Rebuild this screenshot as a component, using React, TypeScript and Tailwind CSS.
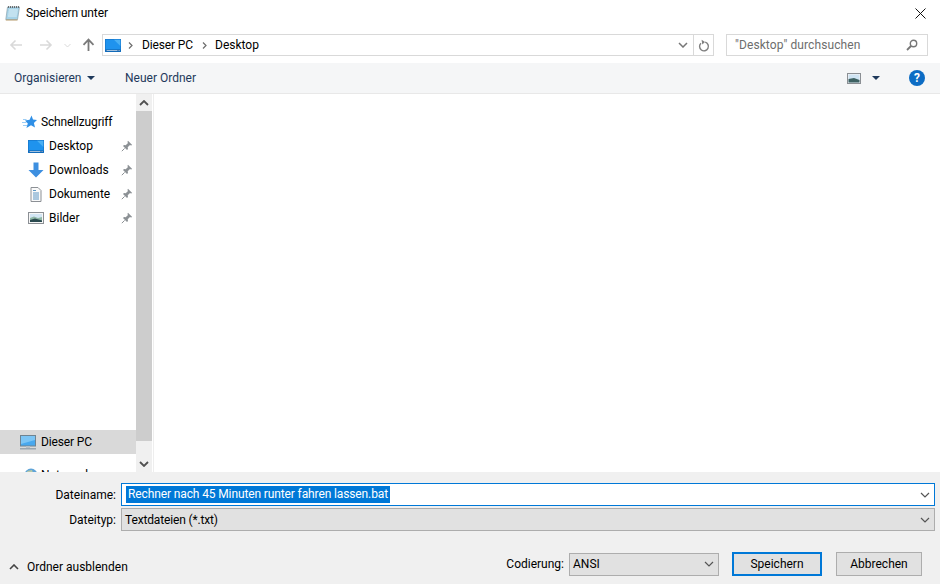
import React from "react";

function Chevron({ className = "", stroke = "#6d6d6d", up = false, sw = 1.2 }: { className?: string; stroke?: string; up?: boolean; sw?: number }) {
  return (
    <svg width="10" height="6" viewBox="0 0 10 6" className={className} fill="none">
      <path d={up ? "M1 5L5 1L9 5" : "M1 1L5 5L9 1"} stroke={stroke} strokeWidth={sw} />
    </svg>
  );
}

function Chevron2() {
  return (
    <svg width="5" height="7" viewBox="0 0 5 7" fill="none">
      <path d="M1 0.5L4 3.5L1 6.5" stroke="#6d6d6d" strokeWidth="1.2" />
    </svg>
  );
}

function MonitorIcon() {
  return (
    <svg width="16" height="13" viewBox="0 0 16 13">
      <rect x="0" y="0" width="16" height="13" fill="#1676c9" />
      <rect x="0.7" y="0.7" width="14.6" height="10" fill="#1f93ee" />
      <path d="M9 0.7H15.3V7Z" fill="#4ab0f5" />
      <rect x="0.7" y="10.7" width="14.6" height="1.6" fill="#0b4f94" />
      <rect x="1.5" y="11.2" width="11" height="0.7" fill="#e4f1fb" />
      <rect x="13.5" y="11.2" width="1.2" height="0.7" fill="#e4f1fb" />
    </svg>
  );
}

function PictureIcon() {
  return (
    <svg width="16" height="12" viewBox="0 0 16 12">
      <rect x="0.5" y="0.5" width="15" height="11" fill="#f6f6f6" stroke="#8b8f94" />
      <rect x="2" y="2" width="12" height="8" fill="#d3e6f4" />
      <path d="M2 6L6 4.5L10 6L14 5V10H2Z" fill="#8fb7a6" />
      <path d="M2 8L7 6.5L14 8.5V10H2Z" fill="#2a4a4f" />
    </svg>
  );
}

function Pin() {
  return (
    <svg width="12" height="12" viewBox="0 0 12 12">
      <path d="M7 0.8L11.2 5L10 5.6L9 5L6.7 7.3L7 9L6 10L2 6L3 5L4.7 5.3L7 3L6.4 2Z" fill="#8c9195" />
      <path d="M3.6 8.4L0.8 11.2" stroke="#8c9195" strokeWidth="1" />
    </svg>
  );
}

function Row({ icon, label, pin = false, selected = false, pl = "pl-[28px]", gap = "w-[21px]", tight = false }: { icon: React.ReactNode; label: string; pin?: boolean; selected?: boolean; pl?: string; gap?: string; tight?: boolean }) {
  return (
    <div className={`h-[24px] shrink-0 flex items-center ${pl} ${selected ? "bg-[#d9d9d9]" : ""}`}>
      <div className={`${gap} shrink-0 flex items-center`}>{icon}</div>
      <span className={`flex-1 text-black ${tight ? "tracking-[-0.15px]" : ""}`}>{label}</span>
      {pin && <div className="mr-[3px] flex"><Pin /></div>}
    </div>
  );
}

export default function App() {
  return (
    <div className="w-[940px] h-[584px] overflow-hidden flex flex-col bg-white text-[12px] leading-[16px] text-black" style={{ fontFamily: 'Roboto, "Noto Sans", sans-serif' }}>
      {/* Title bar */}
      <div className="h-[26px] shrink-0 flex items-center pl-[5px] pr-[14px]">
        <svg width="15" height="16" viewBox="0 0 15 16" className="mr-[6px]">
          <path d="M2.5 2H14.5L12.5 14.5H0.8Z" fill="#a6d3e8" stroke="#8aa2ad" strokeWidth="0.7" />
          <path d="M4 5H12.8M3.6 7H12.5M3.3 9H12.2M3 11H11.8" stroke="#dff0f7" strokeWidth="1" />
          <path d="M3.5 1V3M5.5 1V3M7.5 1V3M9.5 1V3M11.5 1V3M13.5 1V3" stroke="#555" strokeWidth="0.8" />
          <path d="M0.8 15H12.5" stroke="#b59a6b" strokeWidth="1" fill="none" />
        </svg>
        <span className="flex-1 tracking-[-0.12px]">Speichern unter</span>
        <svg width="11" height="11" viewBox="0 0 11 11" fill="none">
          <path d="M0.5 0.5L10.5 10.5M10.5 0.5L0.5 10.5" stroke="#111" strokeWidth="1" />
        </svg>
      </div>

      {/* Nav row */}
      <div className="h-[37px] shrink-0 flex pt-[8px] pr-[12px]">
        <div className="w-[102px] h-[22px] shrink-0 flex items-center">
          <svg width="14" height="12" viewBox="0 0 14 12" className="ml-[9px]" fill="none">
            <path d="M13 6H2M6.5 1.5L2 6L6.5 10.5" stroke="#d9d9d9" strokeWidth="1.6" />
          </svg>
          <svg width="14" height="12" viewBox="0 0 14 12" className="ml-[16px]" fill="none">
            <path d="M1 6H12M7.5 1.5L12 6L7.5 10.5" stroke="#d9d9d9" strokeWidth="1.6" />
          </svg>
          <svg width="7" height="5" viewBox="0 0 7 5" className="ml-[11px]" fill="none">
            <path d="M0.5 1L3.5 4L6.5 1" stroke="#d9d9d9" strokeWidth="1" />
          </svg>
          <svg width="13" height="14" viewBox="0 0 13 14" className="ml-[11px]" fill="none">
            <path d="M6.5 13V2M1.5 6.8L6.5 1.6L11.5 6.8" stroke="#7a7a7a" strokeWidth="1.8" />
          </svg>
        </div>
        <div className="w-[612px] h-[22px] shrink-0 border border-[#d9d9d9] flex items-center">
          <div className="ml-[2px] mr-[7px] flex"><MonitorIcon /></div>
          <Chevron2 />
          <span className="ml-[9px] w-[60px] tracking-[-0.15px]">Dieser PC</span>
          <Chevron2 />
          <span className="ml-[8px]">Desktop</span>
          <div className="flex-1" />
          <Chevron className="mr-[5px]" stroke="#777" sw={1.5} />
          <div className="w-[20px] h-full border-l border-[#d9d9d9] flex items-center justify-center">
            <svg width="12" height="13" viewBox="0 0 12 13" fill="none">
              <path d="M7.2 3.2A4.4 4.4 0 1 1 3 4.2" stroke="#7f7f7f" strokeWidth="1.4" />
              <path d="M3.6 0.8L7 3.1L4.3 5.6Z" fill="#7f7f7f" />
            </svg>
          </div>
        </div>
        <div className="flex-1 ml-[12px] h-[22px] border border-[#d9d9d9] flex items-center pl-[8px] pr-[9px]">
          <span className="flex-1 text-[#6d6d6d] tracking-[0.1px]">"Desktop" durchsuchen</span>
          <svg width="12" height="12" viewBox="0 0 12 12" fill="none">
            <circle cx="7.5" cy="4.5" r="3.2" stroke="#777" strokeWidth="1.4" />
            <path d="M5 7L1 11" stroke="#777" strokeWidth="1.8" />
          </svg>
        </div>
      </div>

      {/* Toolbar */}
      <div className="h-[31px] shrink-0 bg-[#f5f6f7] border-b border-[#e8e8e8] flex items-center pl-[14px] pr-[15px]">
        <span className="text-[#1e395b] w-[68px]">Organisieren</span>
        <svg width="8" height="4" viewBox="0 0 8 4" className="ml-[5px]"><path d="M0 0H8L4 4Z" fill="#1e395b" /></svg>
        <span className="ml-[30px] text-[#1e395b]">Neuer Ordner</span>
        <div className="flex-1" />
        <svg width="14" height="11" viewBox="0 0 14 11">
          <rect x="0.5" y="0.5" width="13" height="10" fill="#f4f4f4" stroke="#8b8f94" />
          <rect x="1.5" y="1.5" width="11" height="8" fill="#cfe4f3" />
          <path d="M1.5 6L7 5L12.5 7V9.5H1.5Z" fill="#3d6162" />
        </svg>
        <svg width="8" height="4" viewBox="0 0 8 4" className="ml-[11px]"><path d="M0 0H8L4 4Z" fill="#1e395b" /></svg>
        <div className="ml-[29px] w-[16px] h-[16px] rounded-full bg-[#0c6cc4] flex items-center justify-center text-white font-bold text-[12px]">?</div>
      </div>

      {/* Main */}
      <div className="h-[378px] shrink-0 flex overflow-hidden">
        <div className="w-[136px] shrink-0 flex flex-col pt-[16px] overflow-hidden">
          <Row pl="pl-[22px]" gap="w-[19px]" label="Schnellzugriff" tight icon={
            <svg width="15" height="14" viewBox="0 0 15 14">
              <path d="M9.5 0.5L11 4.6L15 5L11.9 7.9L13 12.6L9 10.2L4.4 13L5.8 8.4L3 5.4L7.6 4.8Z" fill="#2f8fe6" />
              <path d="M1 4.5H4.5M0 7.5H4.5M1 10.5H5" stroke="#9ccdf5" strokeWidth="1" />
            </svg>
          } />
          <Row pin label="Desktop" icon={<MonitorIcon />} />
          <Row pin label="Downloads" icon={
            <svg width="16" height="16" viewBox="0 0 16 16">
              <path d="M5.5 0.5H10.5V8H15.5L8 15.5L0.5 8H5.5Z" fill="#3d8fe0" />
            </svg>
          } />
          <Row pin label="Dokumente" icon={
            <svg width="16" height="15" viewBox="0 0 16 15">
              <path d="M3 0.5H10L13 3.5V14.5H3Z" fill="#fafafa" stroke="#8c9095" />
              <path d="M5 3.5H8M5 6H11M5 8H11M5 10H11M5 12H11" stroke="#4a8bbd" strokeWidth="0.9" />
            </svg>
          } />
          <Row pin label="Bilder" icon={<PictureIcon />} />
          <div className="mt-[200px]">
            <Row selected pl="pl-[20px]" label="Dieser PC" tight icon={
              <svg width="16" height="15" viewBox="0 0 16 15">
                <rect x="0.5" y="0.5" width="15" height="10.5" fill="#48a8ee" stroke="#6f8391" />
                <path d="M1 1H15V5L1 9Z" fill="#7cc5f5" />
                <rect x="0" y="13" width="16" height="1.5" fill="#9aa6af" />
                <rect x="6" y="11" width="4" height="2" fill="#b6bec4" />
              </svg>
            } />
          </div>
          <div className="mt-[9px]">
            <Row pl="pl-[24px]" gap="w-[17px]" label="Netzwerk" icon={
              <svg width="14" height="14" viewBox="0 0 14 14">
                <circle cx="7" cy="7" r="6.5" fill="#5fa4d8" />
                <path d="M3 3L8 2L9 5L5 7Z" fill="#b7c9a8" />
              </svg>
            } />
          </div>
        </div>
        {/* Scrollbar */}
        <div className="w-[16px] shrink-0 bg-[#f0f0f0] flex flex-col">
          <div className="h-[17px] shrink-0 flex items-center justify-center"><Chevron up stroke="#505050" sw={1.8} /></div>
          <div className="h-[330px] shrink-0 bg-[#cdcdcd]" />
          <div className="flex-1 flex items-end justify-center pb-[5px]"><Chevron stroke="#505050" sw={1.8} /></div>
        </div>
        <div className="flex-1 ml-[1px] border-l border-[#eeeeee] bg-white" />
      </div>

      {/* Bottom panel */}
      <div className="flex-1 bg-[#f0f0f0] flex flex-col pt-[11px] pl-[121px] pr-[5px]">
        <div className="h-[23px] flex border border-[#0078d7] bg-white items-center relative">
          <span className="absolute right-[calc(100%+6px)] whitespace-nowrap">Dateiname:</span>
          <span className="ml-[4px] bg-[#0078d7] text-white px-[2px] h-[17px] leading-[17px] whitespace-nowrap tracking-[-0.12px]">Rechner nach 45 Minuten runter fahren lassen.bat</span>
          <div className="flex-1" />
          <Chevron className="mr-[4px]" stroke="#555" />
        </div>
        <div className="h-[23px] mt-[2px] flex border border-[#adadad] bg-[#e1e1e1] items-center relative">
          <span className="absolute right-[calc(100%+6px)] whitespace-nowrap">Dateityp:</span>
          <span className="ml-[3px] tracking-[-0.15px]">Textdateien (*.txt)</span>
          <div className="flex-1" />
          <Chevron className="mr-[4px]" stroke="#555" />
        </div>
        <div className="mt-[21px] h-[24px] flex items-center -ml-[121px] pr-[13px]">
          <Chevron className="ml-[9px] mt-[6px]" up stroke="#444" sw={1.6} />
          <span className="ml-[8px] mt-[6px]">Ordner ausblenden</span>
          <div className="flex-1" />
          <span className="mr-[5px]">Codierung:</span>
          <div className="w-[150px] h-[23px] border border-[#adadad] bg-[#e1e1e1] flex items-center pl-[3px] pr-[4px]">
            <span className="flex-1">ANSI</span>
            <Chevron stroke="#555" />
          </div>
          <div className="ml-[13px] w-[90px] h-[24px] border-2 border-[#0078d7] bg-[#e1e1e1] flex items-center justify-center">Speichern</div>
          <div className="ml-[14px] w-[86px] h-[24px] border border-[#adadad] bg-[#e1e1e1] flex items-center justify-center">Abbrechen</div>
        </div>
      </div>
    </div>
  );
}
